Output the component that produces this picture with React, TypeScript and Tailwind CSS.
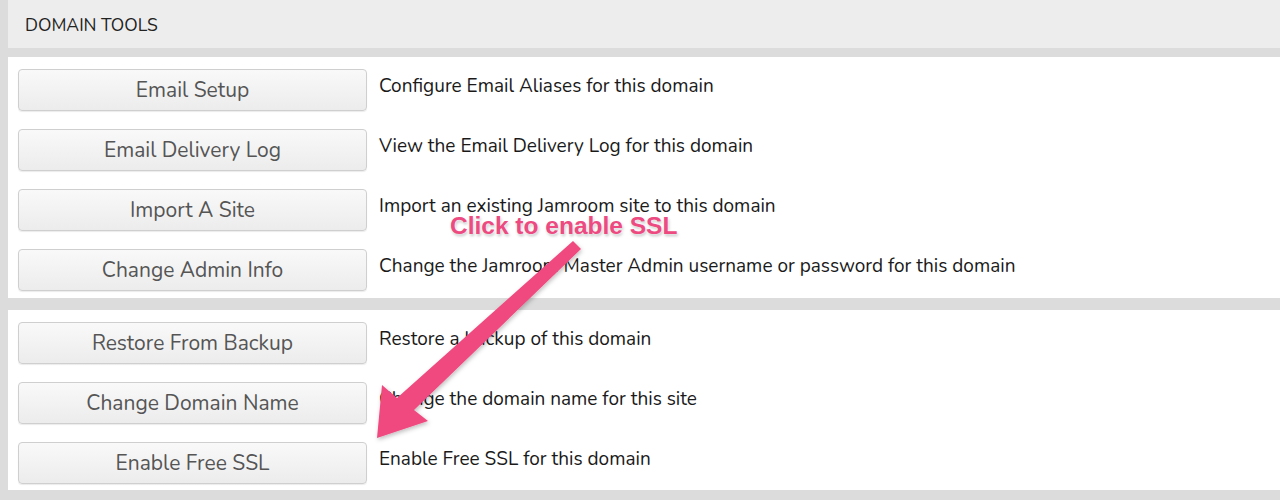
import React from 'react';

interface Tool {
  label: string;
  desc: string;
}

const groupOne: Tool[] = [
  { label: 'Email Setup', desc: 'Configure Email Aliases for this domain' },
  { label: 'Email Delivery Log', desc: 'View the Email Delivery Log for this domain' },
  { label: 'Import A Site', desc: 'Import an existing Jamroom site to this domain' },
  { label: 'Change Admin Info', desc: 'Change the Jamroom Master Admin username or password for this domain' },
];

const groupTwo: Tool[] = [
  { label: 'Restore From Backup', desc: 'Restore a backup of this domain' },
  { label: 'Change Domain Name', desc: 'Change the domain name for this site' },
  { label: 'Enable Free SSL', desc: 'Enable Free SSL for this domain' },
];

function ToolRow({ tool }: { tool: Tool }) {
  return (
    <div className="flex items-start h-[60px]">
      <button className="w-[349px] h-[42px] shrink-0 rounded-[4px] border border-[#cfcfcf] bg-gradient-to-b from-[#f9f9f9] to-[#ececec] text-[21px] text-[#555] leading-none pt-[1px] shadow-[0_1px_1px_rgba(0,0,0,0.08)]">
        {tool.label}
      </button>
      <p className="ml-[12px] mt-[6px] text-[19px] text-[#1a1a1a] leading-[22px]">{tool.desc}</p>
    </div>
  );
}

export default function App() {
  return (
    <div
      className="relative w-[1280px] h-[500px] overflow-hidden bg-[#dcdcdc] pl-[8px]"
      style={{ fontFamily: '"Nunito", "Open Sans", "Noto Sans", sans-serif' }}
    >
      {/* header band */}
      <div className="h-[48px] bg-[#ededed] flex items-center pl-[17px] pt-[2px] text-[17.5px] text-[#222]">
        DOMAIN TOOLS
      </div>

      {/* first group */}
      <div className="mt-[9px] h-[241px] bg-white pl-[10px] pt-[12px]">
        {groupOne.map((t) => (
          <ToolRow key={t.label} tool={t} />
        ))}
      </div>

      {/* second group */}
      <div className="mt-[12px] h-[180px] bg-white pl-[10px] pt-[12px]">
        {groupTwo.map((t) => (
          <ToolRow key={t.label} tool={t} />
        ))}
      </div>

      {/* annotation */}
      <div
        className="absolute left-[450px] top-[214px] text-[24.5px] font-bold text-[#ec4a80] leading-none"
        style={{ fontFamily: '"Liberation Sans", Arial, sans-serif', textShadow: '0 0 3px #fff, 1px 2px 3px rgba(0,0,0,0.25)' }}
      >
        Click to enable SSL
      </div>
      <svg className="absolute left-0 top-0 pointer-events-none" width="1280" height="500" viewBox="0 0 1280 500">
        <defs>
          <filter id="sh" x="-20%" y="-20%" width="140%" height="140%">
            <feDropShadow dx="1" dy="2" stdDeviation="2" floodColor="#000" floodOpacity="0.25" />
          </filter>
        </defs>
        <g filter="url(#sh)" fill="#f0487f">
          <path d="M573 241 L581 249 L414 410 L428 421 L377 438 L382 385 L397 398 Z" />
        </g>
      </svg>
    </div>
  );
}
